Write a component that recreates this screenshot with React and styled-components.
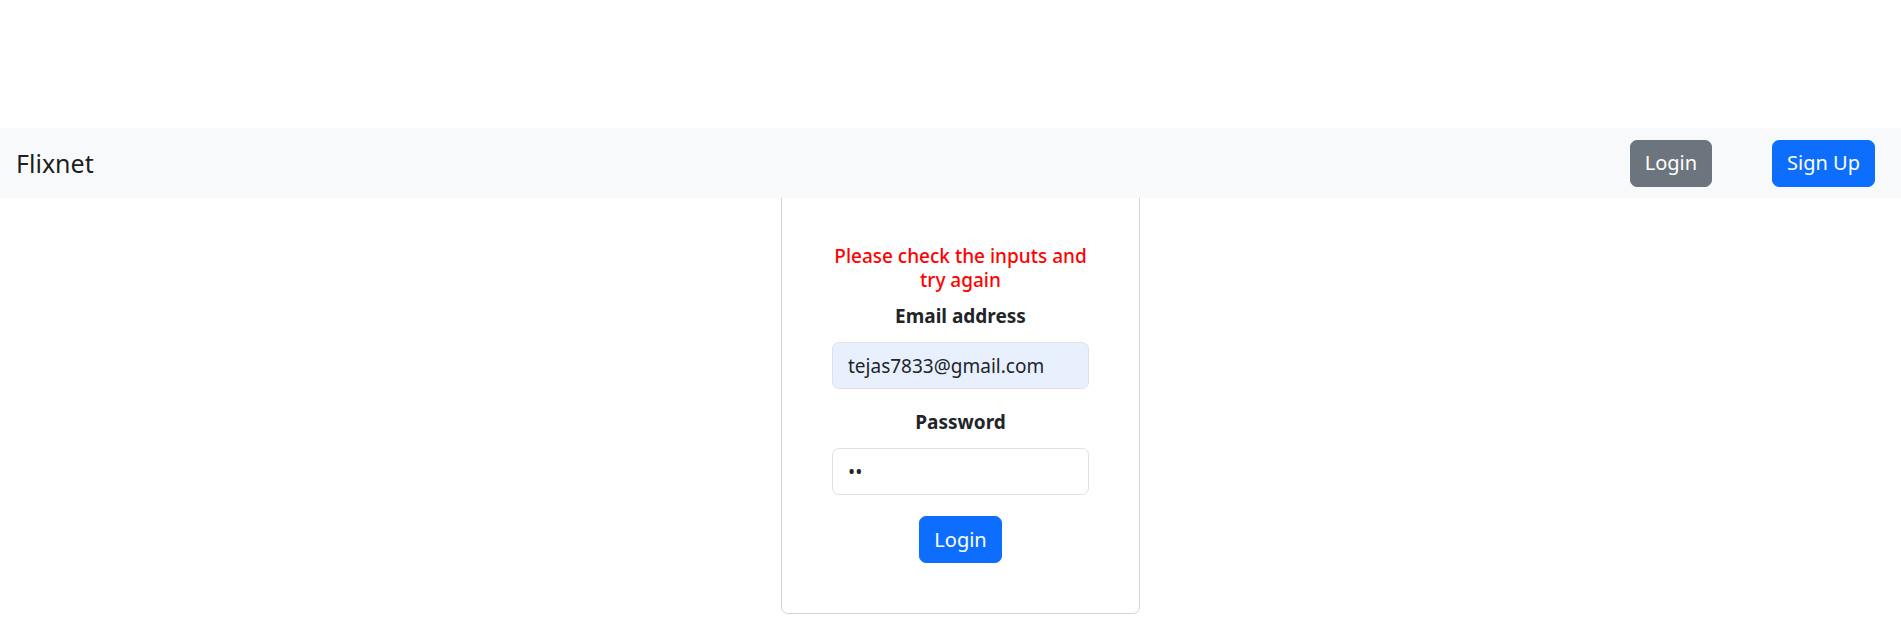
import styled, { createGlobalStyle } from 'styled-components';

const GlobalStyle = createGlobalStyle`
  body {
    margin: 0;
    font-family: "Noto Sans", "Open Sans", sans-serif;
    color: #212529;
    background: #fff;
  }
  * {
    box-sizing: border-box;
  }
`;

const Page = styled.div`
  padding-top: 128px;
`;

const Navbar = styled.nav`
  position: relative;
  z-index: 1;
  height: 70px;
  display: flex;
  align-items: center;
  justify-content: space-between;
  padding: 0 26px 0 16px;
  background: #f8f9fa;
`;

const Brand = styled.span`
  font-size: 25px;
  color: rgba(0, 0, 0, 0.9);
`;

const NavActions = styled.div`
  display: flex;
  align-items: center;
  gap: 60px;
`;

const Button = styled.button`
  height: 47px;
  padding: 0 14px;
  font-family: inherit;
  font-size: 20px;
  line-height: 30px;
  color: #fff;
  border: 1px solid ${({ $variant }) => ($variant === 'secondary' ? '#6c757d' : '#0d6efd')};
  background: ${({ $variant }) => ($variant === 'secondary' ? '#6c757d' : '#0d6efd')};
  border-radius: 7px;
  cursor: pointer;
`;

const Main = styled.main`
  display: flex;
  justify-content: center;
  padding-left: 20px;
`;

const Card = styled.form`
  width: 359px;
  margin-top: -10px;
  padding: 55px 50px 50px;
  display: flex;
  flex-direction: column;
  align-items: center;
  border: 1px solid #d3d4d5;
  border-radius: 7px;
`;

const Error = styled.p`
  margin: 0 0 9px;
  font-size: 19px;
  line-height: 24px;
  font-weight: 500;
  color: #ff0000;
  text-align: center;
`;

const Field = styled.div`
  width: 100%;
  display: flex;
  flex-direction: column;
  align-items: center;
  margin-bottom: ${({ $last }) => ($last ? '21px' : '18px')};
`;

const Label = styled.label`
  margin-bottom: 11px;
  font-size: 19px;
  line-height: 30px;
  font-weight: 700;
`;

const Input = styled.input`
  width: 100%;
  height: 47px;
  padding: 7px 15px;
  font-family: inherit;
  font-size: 19px;
  line-height: 30px;
  color: #212529;
  background: ${({ $filled }) => ($filled ? '#e8f0fe' : '#fff')};
  border: 1px solid #dee2e6;
  border-radius: 7px;
  outline: none;
`;

export default function App() {
  return (
    <>
      <GlobalStyle />
      <Page>
        <Navbar>
          <Brand>Flixnet</Brand>
          <NavActions>
            <Button $variant="secondary">Login</Button>
            <Button>Sign Up</Button>
          </NavActions>
        </Navbar>
        <Main>
          <Card onSubmit={(e) => e.preventDefault()}>
            <Error>Please check the inputs and try again</Error>
            <Field>
              <Label htmlFor="email">Email address</Label>
              <Input id="email" type="email" $filled defaultValue="tejas7833@gmail.com" />
            </Field>
            <Field $last>
              <Label htmlFor="password">Password</Label>
              <Input id="password" type="password" defaultValue="ab" />
            </Field>
            <Button type="submit">Login</Button>
          </Card>
        </Main>
      </Page>
    </>
  );
}
